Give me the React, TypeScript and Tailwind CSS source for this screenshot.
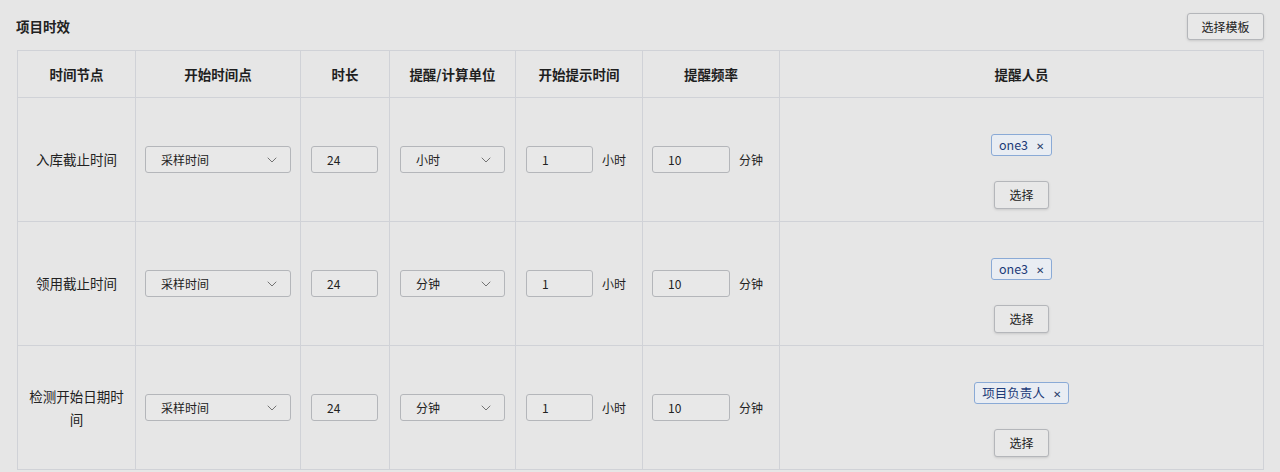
import { ChevronDown } from "lucide-react";

const font = { fontFamily: '"Noto Sans CJK SC", "Noto Sans", sans-serif' };

const rows = [
  { label: "入库截止时间", unit: "小时", people: ["one3"] },
  { label: "领用截止时间", unit: "分钟", people: ["one3"] },
  { label: "检测开始日期时间", unit: "分钟", people: ["项目负责人"] },
];

const headers = ["时间节点", "开始时间点", "时长", "提醒/计算单位", "开始提示时间", "提醒频率", "提醒人员"];

function Select({ value, width }: { value: string; width: string }) {
  return (
    <div
      className={`${width} h-[27px] flex items-center justify-between pl-[15px] pr-[10px] border border-[#b4b6ba] rounded-[3px] bg-[#e8e8e8] text-[12px] text-[#222]`}
    >
      <span>{value}</span>
      <ChevronDown size={16} strokeWidth={1.2} className="text-[#555]" />
    </div>
  );
}

function NumInput({ value, width }: { value: string; width: string }) {
  return (
    <div
      className={`${width} h-[27px] flex items-center pl-[15px] border border-[#b4b6ba] rounded-[3px] bg-[#e8e8e8] text-[12px] text-[#222]`}
    >
      {value}
    </div>
  );
}

function Tag({ name }: { name: string }) {
  return (
    <span className="inline-flex items-center gap-[8px] h-[22px] px-[7px] border border-[#8aaad6] rounded-[3px] bg-[#e9edf3] text-[12.5px] text-[#1d3b78]">
      {name}
      <span className="text-[10px] text-[#2a3f6a]">✕</span>
    </span>
  );
}

export default function App() {
  return (
    <div className="w-[1280px] h-[472px] overflow-hidden bg-[#e6e6e6] px-[17px] text-[#222]" style={font}>
      <div className="flex items-center justify-between h-[50px] pt-[3px]">
        <span className="text-[13.5px] font-semibold -ml-[1px]">项目时效</span>
        <button className="w-[77px] h-[27px] mr-[-1px] border border-[#b4b6ba] rounded-[3px] bg-[#e8e8e8] text-[12px] shadow-sm">
          选择模板
        </button>
      </div>

      <table className="table-fixed border-collapse w-[1247px]">
        <colgroup>
          <col className="w-[118px]" />
          <col className="w-[165px]" />
          <col className="w-[89px]" />
          <col className="w-[126px]" />
          <col className="w-[127px]" />
          <col className="w-[137px]" />
          <col />
        </colgroup>
        <thead>
          <tr className="h-[47px]">
            {headers.map((h) => (
              <th key={h} className="border border-[#d0d2d7] text-[13.5px] font-bold text-[#1f1f1f]">
                {h}
              </th>
            ))}
          </tr>
        </thead>
        <tbody>
          {rows.map((r) => (
            <tr key={r.label} className="h-[124px]">
              <td className="border border-[#d0d2d7] text-center text-[13.5px] px-[10px] leading-[23px]">{r.label}</td>
              <td className="border border-[#d0d2d7] px-[9px]">
                <Select value="采样时间" width="w-[146px]" />
              </td>
              <td className="border border-[#d0d2d7] px-[10px]">
                <NumInput value="24" width="w-[67px]" />
              </td>
              <td className="border border-[#d0d2d7] px-[10px]">
                <Select value={r.unit} width="w-[105px]" />
              </td>
              <td className="border border-[#d0d2d7] px-[10px]">
                <div className="flex items-center gap-[9px]">
                  <NumInput value="1" width="w-[67px]" />
                  <span className="text-[12px]">小时</span>
                </div>
              </td>
              <td className="border border-[#d0d2d7] px-[9px]">
                <div className="flex items-center gap-[9px]">
                  <NumInput value="10" width="w-[78px]" />
                  <span className="text-[12px]">分钟</span>
                </div>
              </td>
              <td className="border border-[#d0d2d7] align-top">
                <div className="flex flex-col items-center pt-[36px] gap-[25px]">
                  {r.people.map((p) => (
                    <Tag key={p} name={p} />
                  ))}
                  <button className="w-[55px] h-[28px] border border-[#b4b6ba] rounded-[3px] bg-[#e8e8e8] text-[12px] shadow-sm">
                    选择
                  </button>
                </div>
              </td>
            </tr>
          ))}
        </tbody>
      </table>
    </div>
  );
}
